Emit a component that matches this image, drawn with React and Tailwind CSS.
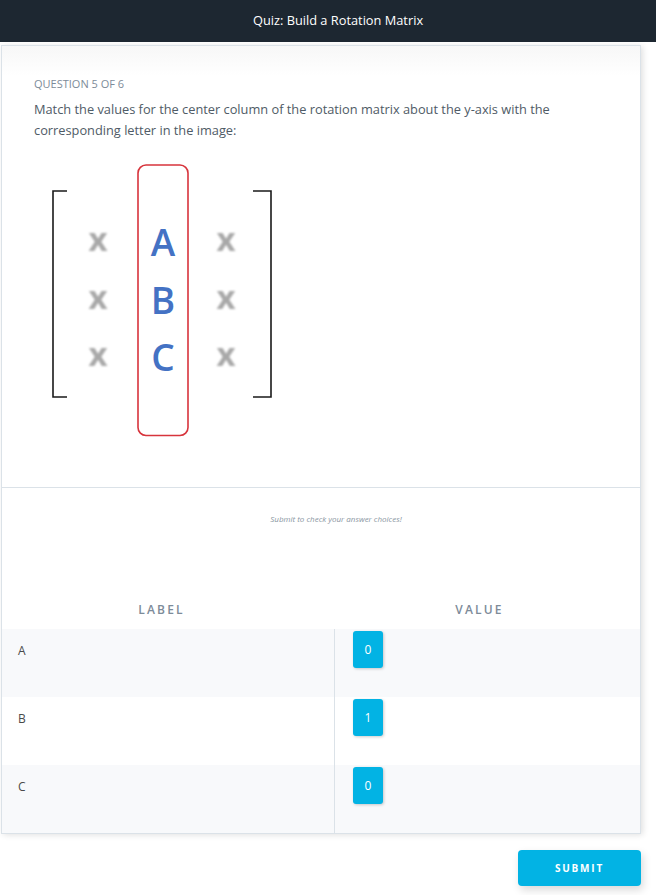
import React from 'react';

const rows = [
  { label: 'A', value: '0' },
  { label: 'B', value: '1' },
  { label: 'C', value: '0' },
];

// drawn in page coordinates through the viewBox
const MatrixFigure = () => (
  <svg width="260" height="300" viewBox="34 150 260 300" className="block">
    <defs>
      <filter id="soft" x="-20%" y="-20%" width="140%" height="140%">
        <feGaussianBlur stdDeviation="0.8" />
      </filter>
    </defs>
    <path d="M67 192 H53 V398 H67" fill="none" stroke="#1a1a1a" strokeWidth="1.6" />
    <path d="M253 192 H271 V398 H253" fill="none" stroke="#1a1a1a" strokeWidth="1.6" />
    <rect x="138" y="166" width="50" height="270.5" rx="8" fill="none" stroke="#d7343c" strokeWidth="1.6" />
    <g fontFamily="'Open Sans', sans-serif" fill="#a8a8a8" fontWeight="700" fontSize="33" textAnchor="middle" filter="url(#soft)">
      <text x="98" y="252">x</text>
      <text x="98" y="310">x</text>
      <text x="98" y="367">x</text>
      <text x="226" y="252">x</text>
      <text x="226" y="310">x</text>
      <text x="226" y="367">x</text>
    </g>
    <g fontFamily="'Open Sans', sans-serif" fill="#4472c4" fontWeight="600" fontSize="37" textAnchor="middle">
      <text x="163" y="257">A</text>
      <text x="163" y="315">B</text>
      <text x="163" y="372">C</text>
    </g>
  </svg>
);

export default function App() {
  return (
    <div className="min-h-screen bg-white font-['Open_Sans',sans-serif]">
      {/* Top bar */}
      <header className="h-[42px] bg-[#1d2731] flex items-center justify-center">
        <h1 className="text-[12.8px] text-white pl-[20px]">Quiz: Build a Rotation Matrix</h1>
      </header>

      {/* Quiz card */}
      <div className="mt-[3px] ml-[1px] w-[640px] border border-[#dbe2e8] bg-white shadow-[2px_1px_6px_rgba(0,0,0,0.12)]">
        <section className="h-[442px] border-b border-[#dbe2e8] bg-[linear-gradient(to_bottom,#f7f7f7,#ffffff_30px)] px-[32px] pt-[31px]">
          <p className="text-[11px] leading-[14px] uppercase text-[#7d8b99]">Question 5 of 6</p>
          <p className="mt-[8px] text-[12.8px] leading-[21px] text-[#4f5b66]">
            Match the values for the center column of the rotation matrix about the y-axis with the corresponding letter in the image:
          </p>
          <div className="mt-[8px]">
            <MatrixFigure />
          </div>
        </section>

        <section>
          <p className="pt-[26px] pl-[30px] text-center text-[8px] leading-[10px] italic text-[#8a96a2]">
            Submit to check your answer choices!
          </p>
          <div className="mt-[78px] grid grid-cols-[333px_1fr] text-[12px] leading-[16px] font-semibold tracking-[0.18em] text-[#7d8b99]">
            <div className="text-center pr-[14px]">LABEL</div>
            <div className="text-center pr-[16px]">VALUE</div>
          </div>
          <div className="mt-[11px]">
            {rows.map((r, i) => (
              <div
                key={r.label}
                className={`grid grid-cols-[333px_1fr] h-[68px] ${i % 2 === 0 ? 'bg-[#f8f9fb]' : 'bg-white'}`}
              >
                <div className="border-r border-[#dbe2e8] pl-[16px] pt-[14px] text-[12px] leading-[16px] text-[#4a4a4a]">
                  {r.label}
                </div>
                <div className="pl-[18px] pt-[2px]">
                  <div className="w-[30px] h-[37px] rounded-[3px] bg-[#02b3e4] shadow-[1px_1px_3px_rgba(0,0,0,0.2)] flex items-center justify-center text-[12px] text-white">
                    {r.value}
                  </div>
                </div>
              </div>
            ))}
          </div>
        </section>
      </div>

      {/* Submit */}
      <div className="flex justify-end pr-[15px] mt-[16px]">
        <button className="w-[123px] h-[36px] rounded-[4px] bg-[#02b3e4] text-white text-[10px] font-bold tracking-[0.18em] shadow-[2px_4px_8px_rgba(0,0,0,0.15)]">
          SUBMIT
        </button>
      </div>
    </div>
  );
}
